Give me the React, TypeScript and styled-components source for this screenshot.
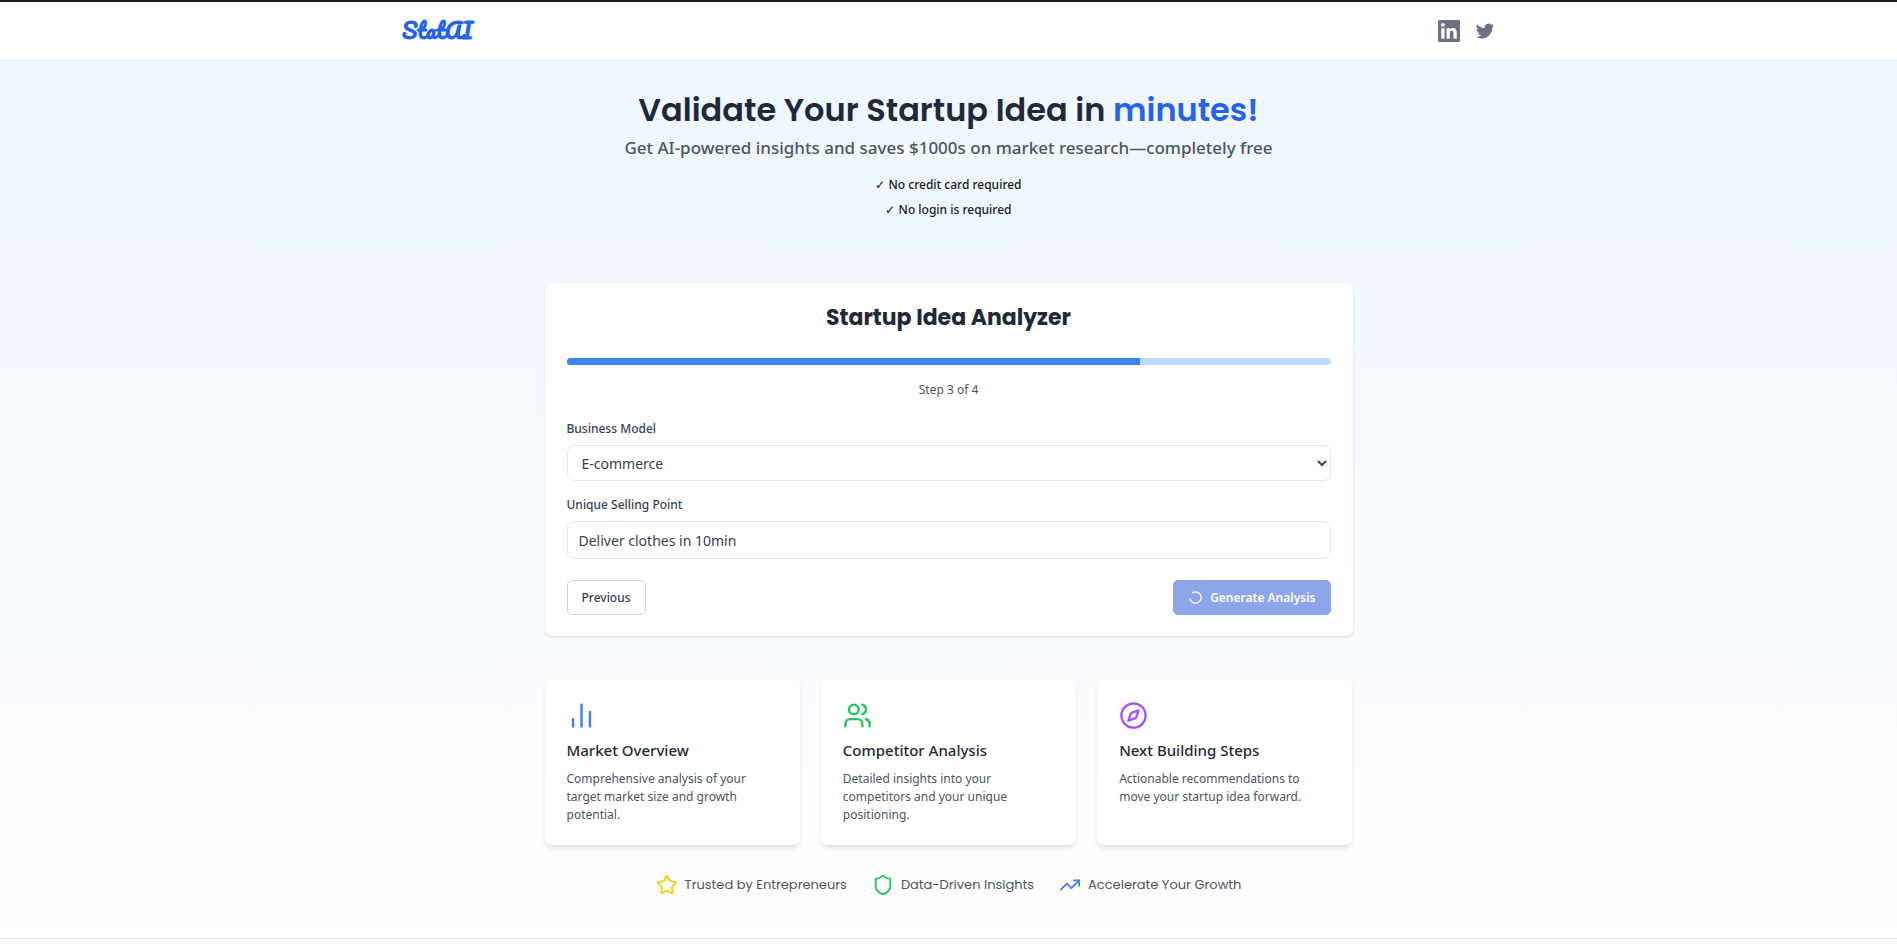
import React from "react";
import styled, { createGlobalStyle } from "styled-components";
import {
  ChartNoAxesColumn,
  Compass,
  LoaderCircle,
  Shield,
  Star,
  TrendingUp,
  Users,
} from "lucide-react";

const display = `Poppins, Inter, "Open Sans", sans-serif`;
const body = `"Segoe UI", "Noto Sans", "Open Sans", sans-serif`;

const GlobalStyle = createGlobalStyle`
  *, *::before, *::after { box-sizing: border-box; }
  body { margin: 0; font-family: ${body}; color: #1f2937; background: #f9fafb; }
  h1, h2, h3, p, ul { margin: 0; padding: 0; }
  ul { list-style: none; }
  button, input, select { font: inherit; }
  svg { display: block; flex-shrink: 0; }
`;

const Page = styled.div`
  display: flex;
  flex-direction: column;
  min-height: 100vh;
  border-top: 2px solid #1a1a20;
`;

const Header = styled.header`
  background: #ffffff;
  border-bottom: 1px solid #e3eaf2;
`;

const HeaderInner = styled.div`
  display: flex;
  align-items: center;
  justify-content: space-between;
  max-width: 1095px;
  height: 58px;
  margin: 0 auto;
`;

const Logo = styled.a`
  padding: 0 1px 2px;
  font-family: Pacifico, Lato, sans-serif;
  font-size: 22px;
  font-weight: 700;
  line-height: 32px;
  color: #2563eb;
  text-decoration: none;
`;

const Social = styled.nav`
  display: flex;
  gap: 14px;

  a { color: #6b7280; }
`;

const Main = styled.main`
  display: flex;
  flex-direction: column;
  align-items: center;
  padding: 29px 16px 42px;
  background: linear-gradient(to bottom, #eff6ff, #ffffff);
`;

const Hero = styled.section`
  text-align: center;
`;

const Headline = styled.h1`
  font-family: ${display};
  font-size: 32px;
  font-weight: 600;
  line-height: 40px;

  span { color: #2563eb; }
`;

const Tagline = styled.p`
  margin-top: 4px;
  font-size: 17px;
  font-weight: 500;
  line-height: 28px;
  color: #4b5563;
`;

const Perks = styled.ul`
  margin-top: 10px;
  font-size: 12px;
  font-weight: 500;
  line-height: 25px;
  color: #111827;
`;

const Column = styled.div`
  width: 100%;
  max-width: 808px;
`;

const Analyzer = styled.section`
  margin-top: 61px;
  padding: 22px 22px 21px;
  background: #ffffff;
  border-radius: 7px;
  box-shadow: 0 1px 3px rgba(0, 0, 0, 0.1), 0 1px 2px rgba(0, 0, 0, 0.06);
`;

const CardTitle = styled.h2`
  font-family: ${display};
  font-size: 22px;
  font-weight: 700;
  line-height: 26px;
  text-align: center;
`;

const Track = styled.div`
  height: 7px;
  margin-top: 27px;
  overflow: hidden;
  background: #bfdbfe;
  border-radius: 4px;
`;

const Fill = styled.div`
  height: 100%;
  background: #3b82f6;
`;

const StepText = styled.p`
  margin-top: 16px;
  font-size: 12px;
  line-height: 18px;
  text-align: center;
  color: #4b5563;
`;

const Field = styled.div<{ $gap: number }>`
  display: flex;
  flex-direction: column;
  gap: 7px;
  margin-top: ${(p) => p.$gap}px;
`;

const Label = styled.label`
  font-size: 12px;
  font-weight: 500;
  line-height: 18px;
  color: #374151;
`;

const Select = styled.select`
  height: 36px;
  padding: 0 0 0 10px;
  font-size: 14px;
  color: #374151;
  background: #ffffff;
  border: 1px solid #e5e7eb;
  border-radius: 7px;
`;

const TextInput = styled.input`
  height: 38px;
  padding: 0 11px;
  font-size: 14px;
  color: #374151;
  background: #ffffff;
  border: 1px solid #e5e7eb;
  border-radius: 7px;
`;

const Actions = styled.div`
  display: flex;
  justify-content: space-between;
  margin-top: 21px;
`;

const Button = styled.button<{ $primary?: boolean }>`
  display: flex;
  align-items: center;
  gap: 7px;
  height: 35px;
  padding: 0 14px;
  font-size: 12px;
  font-weight: ${(p) => (p.$primary ? 600 : 500)};
  color: ${(p) => (p.$primary ? "#ffffff" : "#374151")};
  background: ${(p) => (p.$primary ? "#1d4ed8" : "#ffffff")};
  border: 1px solid ${(p) => (p.$primary ? "#1d4ed8" : "#d1d5db")};
  border-radius: 5px;

  &:disabled { opacity: 0.5; }
`;

const Spinner = styled(LoaderCircle)`
  transform: rotate(-120deg);
`;

const Features = styled.ul`
  display: grid;
  grid-template-columns: repeat(3, 1fr);
  gap: 21px;
  margin-top: 43px;
`;

const FeatureCard = styled.li<{ $accent: string }>`
  padding: 22px 22px 21px;
  background: #ffffff;
  border-radius: 7px;
  box-shadow: 0 4px 6px -1px rgba(0, 0, 0, 0.1), 0 2px 4px -1px rgba(0, 0, 0, 0.06);

  svg { color: ${(p) => p.$accent}; }
`;

const FeatureTitle = styled.h3`
  margin-top: 9px;
  font-size: 15px;
  font-weight: 500;
  line-height: 22px;
`;

const FeatureText = styled.p`
  margin-top: 9px;
  font-size: 12px;
  line-height: 18px;
  color: #4b5563;
`;

const Badges = styled.ul`
  display: flex;
  justify-content: center;
  gap: 25px;
  margin-top: 29px;
`;

const Badge = styled.li<{ $accent: string }>`
  display: flex;
  align-items: center;
  gap: 7px;
  font-family: ${display};
  font-size: 13px;
  line-height: 22px;
  color: #4b5563;

  svg { color: ${(p) => p.$accent}; }
`;

const Footer = styled.footer`
  flex: 1;
  background: #f9fafb;
  border-top: 1px solid #e5e7eb;
`;

const features = [
  { icon: ChartNoAxesColumn, accent: "#3b82f6", title: "Market Overview", text: "Comprehensive analysis of your target market size and growth potential." },
  { icon: Users, accent: "#22c55e", title: "Competitor Analysis", text: "Detailed insights into your competitors and your unique positioning." },
  { icon: Compass, accent: "#a855f7", title: "Next Building Steps", text: "Actionable recommendations to move your startup idea forward." },
];

const badges = [
  { icon: Star, accent: "#facc15", text: "Trusted by Entrepreneurs" },
  { icon: Shield, accent: "#22c55e", text: "Data-Driven Insights" },
  { icon: TrendingUp, accent: "#3b82f6", text: "Accelerate Your Growth" },
];

const LinkedInIcon = () => (
  <svg width="22" height="22" viewBox="0 0 24 24" fill="currentColor" aria-hidden="true">
    <path d="M20.447 20.452h-3.554v-5.569c0-1.328-.027-3.037-1.852-3.037-1.853 0-2.136 1.445-2.136 2.939v5.667H9.351V9h3.414v1.561h.046c.477-.9 1.637-1.85 3.37-1.85 3.601 0 4.267 2.37 4.267 5.455v6.286zM5.337 7.433c-1.144 0-2.063-.926-2.063-2.065 0-1.138.92-2.063 2.063-2.063 1.14 0 2.064.925 2.064 2.063 0 1.139-.925 2.065-2.064 2.065zm1.782 13.019H3.555V9h3.564v11.452zM22.225 0H1.771C.792 0 0 .774 0 1.729v20.542C0 23.227.792 24 1.771 24h20.451C23.2 24 24 23.227 24 22.271V1.729C24 .774 23.2 0 22.222 0h.003z" />
  </svg>
);

const TwitterIcon = () => (
  <svg width="22" height="22" viewBox="0 0 24 24" fill="currentColor" aria-hidden="true">
    <path d="M8.29 20.251c7.547 0 11.675-6.253 11.675-11.675 0-.178 0-.355-.012-.53A8.348 8.348 0 0022 5.92a8.19 8.19 0 01-2.357.646 4.118 4.118 0 001.804-2.27 8.224 8.224 0 01-2.605.996 4.107 4.107 0 00-6.993 3.743 11.65 11.65 0 01-8.457-4.287 4.106 4.106 0 001.27 5.477A4.072 4.072 0 012.8 9.713v.052a4.105 4.105 0 003.292 4.022 4.095 4.095 0 01-1.853.07 4.108 4.108 0 003.834 2.85A8.233 8.233 0 012 18.407a11.616 11.616 0 006.29 1.84" />
  </svg>
);

export default function App() {
  const step = 3;
  const steps = 4;
  return (
    <>
      <GlobalStyle />
      <Page>
        <Header>
          <HeaderInner>
            <Logo href="#">StatAI</Logo>
            <Social>
              <a href="#linkedin" aria-label="LinkedIn"><LinkedInIcon /></a>
              <a href="#twitter" aria-label="Twitter"><TwitterIcon /></a>
            </Social>
          </HeaderInner>
        </Header>
        <Main>
          <Hero>
            <Headline>Validate Your Startup Idea in <span>minutes!</span></Headline>
            <Tagline>Get AI-powered insights and saves $1000s on market research—completely free</Tagline>
            <Perks>
              <li>✓ No credit card required</li>
              <li>✓ No login is required</li>
            </Perks>
          </Hero>
          <Column>
            <Analyzer>
              <CardTitle>Startup Idea Analyzer</CardTitle>
              <Track>
                <Fill style={{ width: `${(step / steps) * 100}%` }} />
              </Track>
              <StepText>Step {step} of {steps}</StepText>
              <form onSubmit={(e) => e.preventDefault()}>
                <Field $gap={21}>
                  <Label htmlFor="model">Business Model</Label>
                  <Select id="model" defaultValue="E-commerce">
                    <option>E-commerce</option>
                  </Select>
                </Field>
                <Field $gap={15}>
                  <Label htmlFor="usp">Unique Selling Point</Label>
                  <TextInput id="usp" type="text" defaultValue="Deliver clothes in 10min" />
                </Field>
                <Actions>
                  <Button type="button">Previous</Button>
                  <Button type="submit" $primary disabled>
                    <Spinner size={15} aria-hidden="true" />
                    Generate Analysis
                  </Button>
                </Actions>
              </form>
            </Analyzer>
            <Features>
              {features.map(({ icon: Icon, accent, title, text }) => (
                <FeatureCard key={title} $accent={accent}>
                  <Icon size={29} aria-hidden="true" />
                  <FeatureTitle>{title}</FeatureTitle>
                  <FeatureText>{text}</FeatureText>
                </FeatureCard>
              ))}
            </Features>
            <Badges>
              {badges.map(({ icon: Icon, accent, text }) => (
                <Badge key={text} $accent={accent}>
                  <Icon size={22} aria-hidden="true" />
                  {text}
                </Badge>
              ))}
            </Badges>
          </Column>
        </Main>
        <Footer />
      </Page>
    </>
  );
}
